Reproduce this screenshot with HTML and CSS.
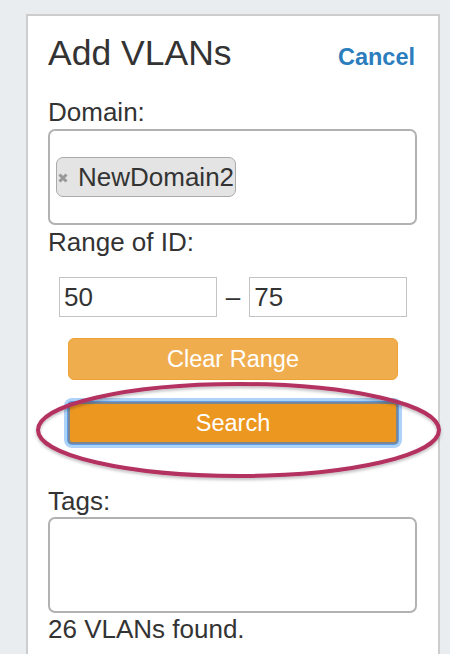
FILE: index.html
```html
<!DOCTYPE html>
<html>
<head>
<meta charset="utf-8">
<link rel="stylesheet" href="styles.css">
</head>
<body>
<div class="panel">
  <div class="head">
    <h1 class="title">Add VLANs</h1>
    <a class="cancel">Cancel</a>
  </div>
  <div class="label">Domain:</div>
  <div class="box domain-box">
    <span class="chip">
      <svg class="chip-x" width="10" height="10" viewBox="0 0 10 10"><path d="M1.5 1.5 L8.5 8.5 M8.5 1.5 L1.5 8.5" stroke="#999" stroke-width="3" stroke-linecap="butt"/></svg>
      <span class="chip-text">NewDomain2</span>
    </span>
  </div>
  <div class="label range-label">Range of ID:</div>
  <div class="range-row">
    <div class="input">50</div>
    <span class="dash">–</span>
    <div class="input">75</div>
  </div>
  <div class="btn btn-clear">Clear Range</div>
  <div class="btn btn-search">Search</div>
  <div class="label tags-label">Tags:</div>
  <div class="box tags-box"></div>
  <div class="found">26 VLANs found.</div>
</div>
<svg class="ring" width="450" height="654" viewBox="0 0 450 654">
  <defs>
    <filter id="sh" x="-10%" y="-20%" width="120%" height="140%">
      <feDropShadow dx="0" dy="2" stdDeviation="1.5" flood-color="#000" flood-opacity="0.25"/>
    </filter>
  </defs>
  <ellipse cx="238.5" cy="430" rx="200.5" ry="46" fill="none" stroke="#b4305f" stroke-width="4" filter="url(#sh)"/>
</svg>
</body>
</html>
```
FILE: styles.css
```css
html, body {
  margin: 0;
  padding: 0;
}
body {
  background: #e9edf0;
  width: 450px;
  height: 654px;
  overflow: hidden;
  position: relative;
  font-family: "Liberation Sans", Arial, sans-serif;
  color: #333;
}
.panel {
  margin: 14px 0 0 26px;
  width: 414px;
  box-sizing: border-box;
  height: 660px;
  background: #fff;
  border: 2px solid #cdcdcd;
  border-bottom: none;
  padding: 17px 21px 0 20px;
}
.head {
  display: flex;
  justify-content: space-between;
  align-items: baseline;
  padding-right: 2px;
  height: 40px;
}
.title {
  margin: 0;
  font-size: 35.5px;
  line-height: 40px;
  font-weight: normal;
  color: #333;
}
.cancel {
  font-size: 23.5px;
  font-weight: bold;
  color: #2b7dbd;
}
.label {
  font-size: 26px;
  line-height: 30px;
  margin-top: 24px;
}
.range-label {
  margin-top: 2px;
}
.tags-label {
  margin-top: 42px;
}
.box {
  box-sizing: border-box;
  height: 96px;
  border: 2px solid #b2b2b2;
  border-radius: 7px;
  margin-top: 2px;
}
.tags-box {
  margin-top: 1px;
}
.domain-box {
  display: flex;
  align-items: center;
  padding-left: 6px;
}
.chip {
  display: flex;
  align-items: center;
  box-sizing: border-box;
  height: 40px;
  background: #e4e4e4;
  border: 1.5px solid #aaa;
  border-radius: 7px;
  padding: 0 1px 0 1px;
}
.chip-x {
  display: block;
  margin-right: 10px;
  margin-top: 2px;
}
.chip-text {
  font-size: 26px;
  line-height: 30px;
  color: #333;
}
.range-row {
  display: grid;
  grid-template-columns: 1fr auto 1fr;
  align-items: center;
  column-gap: 9px;
  margin-top: 20px;
  padding: 0 10px 0 11px;
}
.input {
  box-sizing: border-box;
  height: 40px;
  border: 1px solid #c4c4c4;
  font-size: 26px;
  line-height: 38px;
  padding-left: 4px;
  color: #333;
}
.dash {
  font-size: 26px;
  color: #333;
}
.btn {
  box-sizing: border-box;
  height: 42px;
  margin: 0 19px 0 20px;
  border-radius: 6px;
  color: #fff;
  font-size: 23.5px;
  display: flex;
  align-items: center;
  justify-content: center;
}
.btn-clear {
  margin-top: 21px;
  background: #f0ad4e;
  border: 1.5px solid #eea236;
}
.btn-search {
  margin-top: 22px;
  background: #ec971f;
  border: 2px solid #7b8794;
  border-radius: 4px;
  box-shadow: 0 0 0 1px #5d9ee6, 0 0 0 4px rgba(140, 192, 245, 0.7);
}
.found {
  font-size: 26px;
  line-height: 30px;
  margin-top: 1px;
}
.ring {
  position: absolute;
  left: 0;
  top: 0;
  pointer-events: none;
}
```
